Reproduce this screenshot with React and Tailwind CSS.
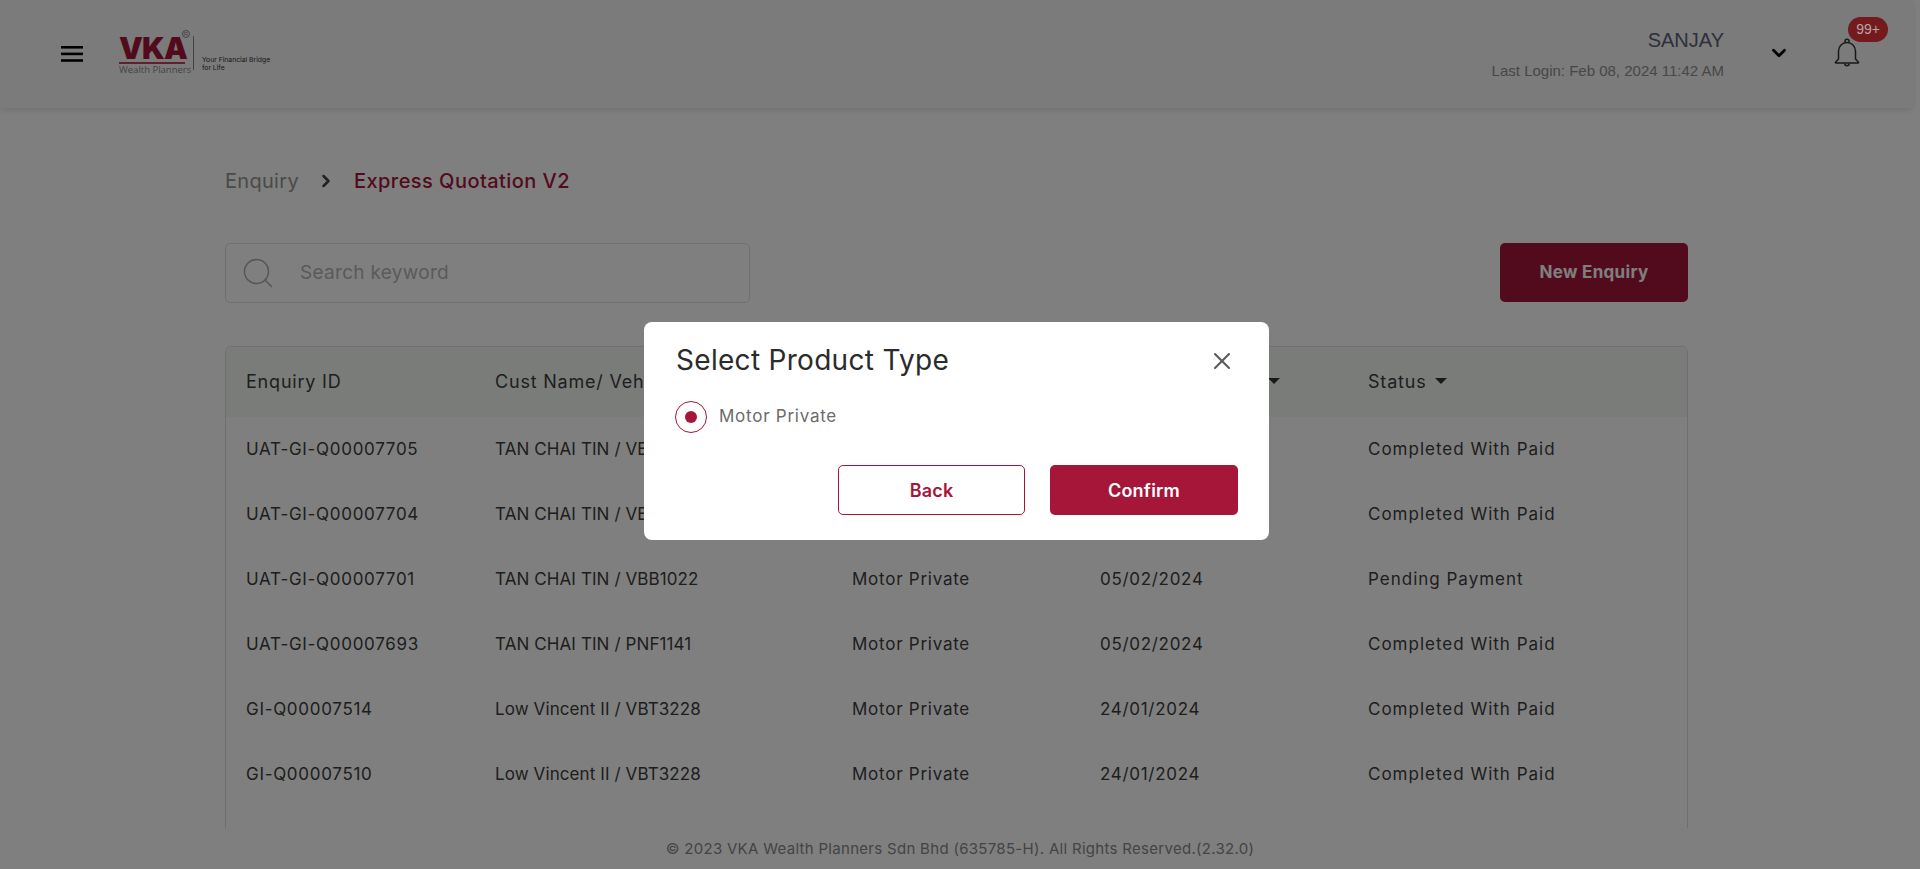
import { ChevronRight, ChevronDown, Search, X } from "lucide-react";

const ROWS = [
  ["UAT-GI-Q00007705", "TAN CHAI TIN / VEP1022", "Motor Private", "06/02/2024", "Completed With Paid"],
  ["UAT-GI-Q00007704", "TAN CHAI TIN / VEP1022", "Motor Private", "06/02/2024", "Completed With Paid"],
  ["UAT-GI-Q00007701", "TAN CHAI TIN / VBB1022", "Motor Private", "05/02/2024", "Pending Payment"],
  ["UAT-GI-Q00007693", "TAN CHAI TIN / PNF1141", "Motor Private", "05/02/2024", "Completed With Paid"],
  ["GI-Q00007514", "Low Vincent II / VBT3228", "Motor Private", "24/01/2024", "Completed With Paid"],
  ["GI-Q00007510", "Low Vincent II / VBT3228", "Motor Private", "24/01/2024", "Completed With Paid"],
  ["GI-Q00007508", "Low Vincent II / VBT3228", "Motor Private", "24/01/2024", "Completed With Paid"],
];

const GRID = "grid grid-cols-[249px_357px_248px_268px_1fr] px-[20px] items-center";

// Inter runs narrower than the original face, so each column gets its own spacing
const CELL_TRACKING = ["tracking-[0.7px]", "tracking-[0.1px]", "tracking-[0.75px]", "tracking-[0.7px]", "tracking-[1px]"];

function Caret() {
  return <span className="inline-block ml-[9px] w-0 h-0 border-x-[6.5px] border-x-transparent border-t-[6px] border-t-[#333]" />;
}

function BellIcon() {
  return (
    <svg width="26" height="29" viewBox="0 0 26 29" fill="none" stroke="#333" strokeWidth="1.5" strokeLinejoin="round">
      <path d="M4.5 21V13a8.5 8.5 0 0 1 17 0v8l3 3.2a.5.5 0 0 1-.4.8H1.9a.5.5 0 0 1-.4-.8z" />
      <path d="M11 4.8V3.2a2 2 0 0 1 4 0v1.6" />
      <path d="M10.8 25.5a2.2 2.2 0 0 0 4.4 0" />
    </svg>
  );
}

function Logo() {
  return (
    <div className="flex items-start">
      <div className="relative w-[66px] flex flex-col">
        <span className="font-['Inter',sans-serif] font-black text-[30px] leading-[25px] h-[25px] tracking-[-0.8px] text-[#a51638]">VKA</span>
        <span className="absolute right-[-5px] top-[-6px] w-[8px] h-[8px] rounded-full border border-[#888] text-[6px] leading-[6px] text-center text-[#888]">R</span>
        <div className="h-[2px] bg-[#c0405f] mt-[1px]" />
        <span className="font-['Open_Sans',sans-serif] text-[9.5px] leading-[11px] text-[#888] whitespace-nowrap">Wealth Planners</span>
      </div>
      <div className="w-px h-[34px] bg-[#888] ml-[8px]" />
      <div className="ml-[8px] mt-[20px] font-['Inter',sans-serif] text-[6.8px] leading-[8.5px] text-[#333]">
        <div>Your Financial Bridge</div>
        <div>for Life</div>
      </div>
    </div>
  );
}

export default function App() {
  return (
    <div className="h-screen overflow-hidden bg-white pr-[7px] font-['Inter',sans-serif]">
      <div className="h-full flex flex-col">
        {/* Header */}
        <header className="h-[108px] shrink-0 bg-[#f6f6f6] shadow-[0_2px_6px_rgba(0,0,0,0.12)] flex items-center pl-[61px] pr-[53px] font-['Liberation_Sans',sans-serif]">
          <svg width="22" height="16" viewBox="0 0 22 16" fill="#000">
            <rect y="0" width="22" height="2.6" />
            <rect y="6.6" width="22" height="2.6" />
            <rect y="13.2" width="22" height="2.6" />
          </svg>
          <div className="ml-[36px] mt-[2px]">
            <Logo />
          </div>
          <div className="ml-auto mt-[-1px] mr-[-1px] flex flex-col items-end">
            <span className="text-[20px] leading-[24px] text-[#5a607a]">SANJAY</span>
            <span className="mt-[11px] text-[15px] leading-[16px] text-[#8f8f8f]">Last Login: Feb 08, 2024 11:42 AM</span>
          </div>
          <ChevronDown size={22} strokeWidth={3} color="#000" className="ml-[45px] mt-[-2px]" />
          <div className="relative ml-[44px] mt-[-4px]">
            <BellIcon />
            {/* sits over the dimming layer in the reference colours */}
            <span className="absolute z-10 left-[14px] top-[-21px] w-[40px] h-[25px] rounded-full bg-[#751a1c] text-[#b5a5aa] text-[14px] leading-[25px] text-center">99+</span>
          </div>
        </header>

        {/* Page content */}
        <main className="flex-1 min-h-0 overflow-hidden px-[225px] pt-[59px]">
          <div className="flex items-center text-[20px] leading-[28px] tracking-[0.3px]">
            <span className="text-[#949494]">Enquiry</span>
            <ChevronRight size={20} strokeWidth={3} color="#444" className="ml-[17px]" />
            <span className="ml-[18px] text-[#a51638] font-medium tracking-[0.45px]">Express Quotation V2</span>
          </div>

          <div className="mt-[48px] flex justify-between">
            <div className="w-[525px] h-[60px] border border-[#dedede] rounded-[5px] flex items-center pl-[14px]">
              <Search size={36} strokeWidth={1} color="#aaa" />
              <input
                placeholder="Search keyword"
                className="ml-[24px] flex-1 outline-none text-[19px] tracking-[0.3px] placeholder:text-[#b4b4b4]"
              />
            </div>
            <button className="w-[188px] h-[59px] pt-[1px] rounded-[5px] bg-[#a51638] text-white text-[17px] tracking-[0.3px] font-bold">New Enquiry</button>
          </div>

          <div className="mt-[43px] border border-[#dedede] rounded-[6px] text-[17px] text-[#3d3d3d]">
            <div className={`${GRID} h-[70px] pb-[2px] bg-[#f4f8f4] rounded-t-[6px] text-[18px] tracking-[0.8px]`}>
              <span>Enquiry ID</span>
              <span className="whitespace-nowrap">Cust Name/ Vehicle No</span>
              <span>Product</span>
              <span className="flex items-center justify-between w-[180px] whitespace-nowrap">Submission Date<Caret /></span>
              <span className="flex items-center">Status<Caret /></span>
            </div>
            {ROWS.map((row) => (
              <div key={row[0]} className={`${GRID} h-[65px]`}>
                {row.map((cell, i) => (
                  <span key={i} className={`whitespace-nowrap ${CELL_TRACKING[i]}`}>{cell}</span>
                ))}
              </div>
            ))}
          </div>
        </main>

        {/* Footer */}
        <footer className="h-[41px] shrink-0 mr-[-7px] pt-[2px] flex items-center justify-center text-[15px] tracking-[0.3px] text-[#888]">
          © 2023 VKA Wealth Planners Sdn Bhd (635785-H). All Rights Reserved.(2.32.0)
        </footer>
      </div>

      {/* Modal overlay */}
      <div className="fixed inset-0 bg-black/50 pr-[7px] pt-[322px] flex justify-center items-start">
        <div className="w-[625px] h-[218px] bg-white rounded-[8px] px-[32px] pt-[20px]">
          <div className="flex items-center justify-between">
            <h2 className="text-[28px] leading-[36px] tracking-[0.3px] text-[#2b2b2b]">Select Product Type</h2>
            <X size={28} strokeWidth={1.8} color="#5c5c5c" className="mr-[1px] mt-[2px]" />
          </div>
          <label className="mt-[21px] flex items-center">
            <span className="w-[32px] h-[32px] rounded-full border border-[#a51638] flex items-center justify-center mt-[2px] ml-[-1px]">
              <span className="w-[12px] h-[12px] rounded-full bg-[#a51638]" />
            </span>
            <span className="ml-[12px] mt-[2px] text-[17px] tracking-[0.75px] text-[#6b6b6b]">Motor Private</span>
          </label>
          <div className="mt-[32px] flex justify-end gap-[25px] mr-[-1px]">
            <button className="w-[187px] h-[50px] rounded-[5px] border border-[#a51638] text-[#a51638] text-[18px] tracking-[0.2px] font-semibold">Back</button>
            <button className="w-[188px] h-[50px] rounded-[5px] bg-[#a51638] text-white text-[18px] tracking-[0.2px] font-semibold">Confirm</button>
          </div>
        </div>
      </div>
    </div>
  );
}
